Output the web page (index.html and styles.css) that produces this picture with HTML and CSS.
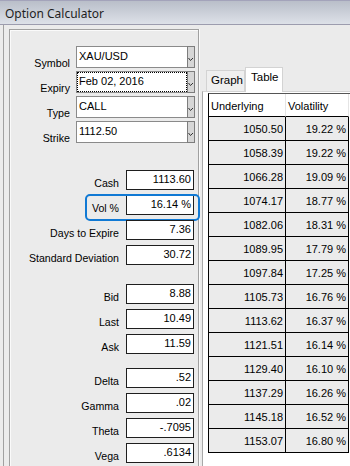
FILE: index.html
```html
<!DOCTYPE html>
<html>
<head>
<meta charset="utf-8">
<link rel="stylesheet" href="styles.css">
</head>
<body>
<div class="titlebar">Option Calculator</div>
<div class="main">
  <div class="left">
    <div class="panel">
      <div class="group combos">
        <div class="crow"><span class="lbl">Symbol</span><div class="combo"><span class="ctext">XAU/USD</span><span class="cbtn"><svg width="6" height="5" viewBox="0 0 6 5"><path d="M0.5 1 L2.5 3.5 L5 1" fill="none" stroke="#333" stroke-width="1"/></svg></span></div></div>
        <div class="crow"><span class="lbl">Expiry</span><div class="combo"><span class="ctext focused">Feb 02, 2016</span><span class="cbtn"><svg width="6" height="5" viewBox="0 0 6 5"><path d="M0.5 1 L2.5 3.5 L5 1" fill="none" stroke="#333" stroke-width="1"/></svg></span></div></div>
        <div class="crow"><span class="lbl">Type</span><div class="combo"><span class="ctext">CALL</span><span class="cbtn"><svg width="6" height="5" viewBox="0 0 6 5"><path d="M0.5 1 L2.5 3.5 L5 1" fill="none" stroke="#333" stroke-width="1"/></svg></span></div></div>
        <div class="crow"><span class="lbl">Strike</span><div class="combo"><span class="ctext">1112.50</span><span class="cbtn"><svg width="6" height="5" viewBox="0 0 6 5"><path d="M0.5 1 L2.5 3.5 L5 1" fill="none" stroke="#333" stroke-width="1"/></svg></span></div></div>
      </div>
      <div class="group fields g1">
        <div class="frow"><span class="lbl">Cash</span><span class="box">1113.60</span></div>
        <div class="frow focus"><span class="lbl">Vol %</span><span class="box">16.14 %</span></div>
        <div class="frow"><span class="lbl">Days to Expire</span><span class="box">7.36</span></div>
        <div class="frow"><span class="lbl">Standard Deviation</span><span class="box">30.72</span></div>
      </div>
      <div class="group fields g2">
        <div class="frow"><span class="lbl">Bid</span><span class="box">8.88</span></div>
        <div class="frow"><span class="lbl">Last</span><span class="box">10.49</span></div>
        <div class="frow"><span class="lbl">Ask</span><span class="box">11.59</span></div>
      </div>
      <div class="group fields g3">
        <div class="frow"><span class="lbl">Delta</span><span class="box">.52</span></div>
        <div class="frow"><span class="lbl">Gamma</span><span class="box">.02</span></div>
        <div class="frow"><span class="lbl">Theta</span><span class="box">-.7095</span></div>
        <div class="frow"><span class="lbl">Vega</span><span class="box">.6134</span></div>
      </div>
    </div>
  </div>
  <div class="right">
    <div class="tabs"><span class="tab">Graph</span><span class="tab active">Table</span></div>
    <div class="pane">
      <div class="grid">
        <div class="hd">Underlying</div><div class="hd">Volatility</div>
        <div class="c">1050.50</div><div class="c">19.22 %</div>
        <div class="c">1058.39</div><div class="c">19.22 %</div>
        <div class="c">1066.28</div><div class="c">19.09 %</div>
        <div class="c">1074.17</div><div class="c">18.77 %</div>
        <div class="c">1082.06</div><div class="c">18.31 %</div>
        <div class="c">1089.95</div><div class="c">17.79 %</div>
        <div class="c">1097.84</div><div class="c">17.25 %</div>
        <div class="c">1105.73</div><div class="c">16.76 %</div>
        <div class="c">1113.62</div><div class="c">16.37 %</div>
        <div class="c">1121.51</div><div class="c">16.14 %</div>
        <div class="c">1129.40</div><div class="c">16.10 %</div>
        <div class="c">1137.29</div><div class="c">16.26 %</div>
        <div class="c">1145.18</div><div class="c">16.52 %</div>
        <div class="c">1153.07</div><div class="c">16.80 %</div>
      </div>
    </div>
  </div>
</div>
</body>
</html>
```
FILE: styles.css
```css
* { box-sizing: border-box; }
html, body {
  margin: 0;
  padding: 0;
}
body {
  width: 350px;
  height: 466px;
  overflow: hidden;
  background: #ebebeb;
  font-family: "Liberation Sans", Arial, sans-serif;
  font-size: 11px;
  color: #000;
}
.titlebar {
  height: 25px;
  border-top: 1px solid #a3a3ba;
  border-bottom: 1px solid #9c9cae;
  background: linear-gradient(#b9bec9, #dde1e8);
  font-family: "Noto Sans", sans-serif;
  font-size: 12px;
  line-height: 25px;
  padding-left: 5px;
  color: #1e1e1e;
}
.main {
  display: flex;
  height: 441px;
}
.left {
  margin-left: 3px;
  border-left: 1px solid #a0a0a0;
  padding: 4px 0 0 5px;
}
.panel {
  width: 190px;
  height: 100%;
  border: 1px solid #a0a0a0;
  border-bottom: none;
  box-shadow: inset 1px 1px 0 #fafafa, 1px 0 0 #fafafa;
}
.group {
  display: flex;
  flex-direction: column;
}
.combos {
  padding-top: 16px;
  gap: 3px;
}
.crow {
  display: flex;
  height: 22px;
}
.crow .lbl {
  width: 60px;
  text-align: right;
  align-self: flex-end;
  line-height: 13px;
  margin-bottom: -2px;
  font-size: 10.7px;
}
.combo {
  margin-left: 6px;
  width: 119px;
  height: 22px;
  border: 1px solid #8a8a8a;
  background: #fff;
  display: flex;
  padding: 1px;
}
.ctext {
  flex: 1;
  padding-left: 1px;
  line-height: 16px;
}
.ctext.focused {
  outline: 1px dotted #000;
  outline-offset: 0;
  margin: 0 1px 0 0;
}
.cbtn {
  width: 8px;
  margin: -2px -2px -2px 0;
  background: #d6d6d6;
  border: 1px solid #7d7d7d;
  display: flex;
  justify-content: center;
  padding-top: 10px;
}
.cbtn svg { display: block; }
.fields { gap: 5px; }
.g1 { margin-top: 27px; }
.g2 { margin-top: 19px; }
.g3 { margin-top: 14px; }
.frow {
  display: flex;
  height: 20px;
  position: relative;
}
.frow .lbl {
  width: 109px;
  text-align: right;
  line-height: 20px;
  padding-top: 3px;
  font-size: 10.6px;
}
.box {
  margin-left: 7px;
  width: 68px;
  height: 20px;
  border: 1px solid #1e1e1e;
  background: #fff;
  text-align: right;
  padding-right: 2px;
  line-height: 16px;
}
.focus::before {
  content: "";
  position: absolute;
  left: 75px;
  top: -1px;
  width: 111px;
  height: 23px;
  border: 2.5px solid #1079d4;
  border-radius: 5px;
  pointer-events: none;
}
.right {
  flex: 1;
  display: flex;
  flex-direction: column;
}
.tabs {
  margin-top: 42px;
  height: 24px;
  display: flex;
  align-items: flex-end;
  padding-left: 7px;
}
.tab {
  height: 21px;
  width: 39px;
  border: 1px solid #d3d3d3;
  border-bottom: none;
  background: #efefef;
  padding-left: 4px;
  line-height: 19px;
  font-size: 11.5px;
}
.tab.active {
  height: 25px;
  width: 38px;
  margin-bottom: -1px;
  background: #fff;
  position: relative;
  z-index: 1;
  padding-left: 5px;
  line-height: 19px;
}
.pane {
  flex: 1;
  margin-left: 3px;
  border-top: 1px solid #d3d3d3;
  border-left: 1px solid #a8a8a8;
  background: #fff;
  padding: 1px 0 0 5px;
}
.grid {
  display: grid;
  grid-template-columns: 77px 63px;
  border-top: 1px solid #555;
  border-left: 1px solid #000;
}
.hd {
  height: 23px;
  background: #fff;
  border-bottom: 1px solid #000;
  border-right: 1px solid #e4e4e4;
  padding-left: 2px;
  line-height: 25px;
}
.c {
  height: 24px;
  background: #ebebeb;
  border-bottom: 1px solid #000;
  border-right: 1px solid #000;
  text-align: right;
  padding-right: 2px;
  line-height: 24px;
}
```
